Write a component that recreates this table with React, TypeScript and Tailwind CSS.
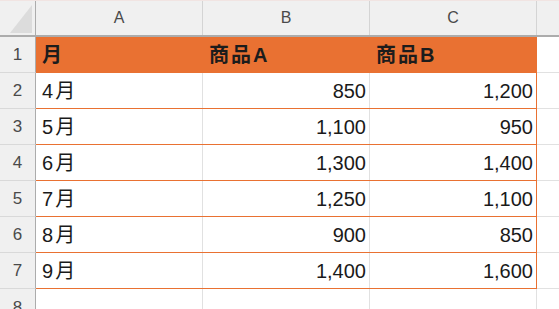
import React from "react";

const rows: [string, string, string][] = [
  ["4", "850", "1,200"],
  ["5", "1,100", "950"],
  ["6", "1,300", "1,400"],
  ["7", "1,250", "1,100"],
  ["8", "900", "850"],
  ["9", "1,400", "1,600"],
];

const font = { fontFamily: '"Liberation Sans", "Noto Sans CJK JP", sans-serif' };

export default function App() {
  return (
    <div className="w-[559px] h-[309px] overflow-hidden bg-white" style={font}>
      <div className="h-px bg-[#f1e4e2]" />
      {/* column headers */}
      <div className="flex h-[36px] bg-[#f0f0f0] border-b-2 border-[#acacac]">
        <div className="w-[36px] shrink-0 border-r border-[#acacac] relative">
          <svg width="36" height="34" className="absolute left-0 top-0">
            <polygon points="32,4 32,32 10,32" fill="#dcdcdc" />
          </svg>
        </div>
        {["A", "B", "C"].map((c) => (
          <div
            key={c}
            className="w-[167px] shrink-0 border-r border-[#d4d4d4] flex items-center justify-center text-[16px] text-[#4a4a4a]"
          >
            {c}
          </div>
        ))}
        <div className="flex-1" />
      </div>
      {/* row 1 */}
      <div className="flex h-[36px]">
        <div className="w-[36px] shrink-0 bg-[#f0f0f0] border-r border-[#acacac] border-b border-b-[#d9d9d9] flex items-center justify-center text-[17px] text-[#4a4a4a]">
          1
        </div>
        <div className="w-[501px] shrink-0 bg-[#e97132] flex text-[20px] font-bold text-[#1c1c1c]">
          <div className="w-[167px] pl-[6px] flex items-center">月</div>
          <div className="w-[167px] pl-[6px] flex items-center tracking-[2px]">商品A</div>
          <div className="w-[167px] pl-[6px] flex items-center tracking-[2px]">商品B</div>
        </div>
        <div className="flex-1 border-b border-[#e1e1e1]" />
      </div>
      {rows.map((r, i) => (
        <div key={i} className="flex h-[36px]">
          <div className="w-[36px] shrink-0 bg-[#f0f0f0] border-r border-[#acacac] border-b border-b-[#d9d9d9] flex items-center justify-center text-[17px] text-[#4a4a4a]">
            {i + 2}
          </div>
          <div className="w-[501px] shrink-0 flex border-b border-[#e97132] border-r text-[20px] text-[#1a1a1a]">
            <div className="w-[167px] pl-[6px] flex items-center border-r border-[#e1e1e1]">
              <span>{r[0]}</span>
              <span className="ml-[2px]">月</span>
            </div>
            <div className="w-[167px] pr-[3px] flex items-center justify-end border-r border-[#e1e1e1]">{r[1]}</div>
            <div className="flex-1 pr-[3px] flex items-center justify-end">{r[2]}</div>
          </div>
          <div className="flex-1 border-b border-[#e1e1e1]" />
        </div>
      ))}
      <div className="flex h-[36px]">
        <div className="w-[36px] shrink-0 bg-[#f0f0f0] border-r border-[#acacac] flex items-start justify-center pt-[6px] text-[17px] text-[#4a4a4a]">
          8
        </div>
        <div className="w-[167px] shrink-0 border-r border-[#e1e1e1]" />
        <div className="w-[167px] shrink-0 border-r border-[#e1e1e1]" />
        <div className="w-[167px] shrink-0 border-r border-[#e1e1e1]" />
        <div className="flex-1" />
      </div>
    </div>
  );
}
